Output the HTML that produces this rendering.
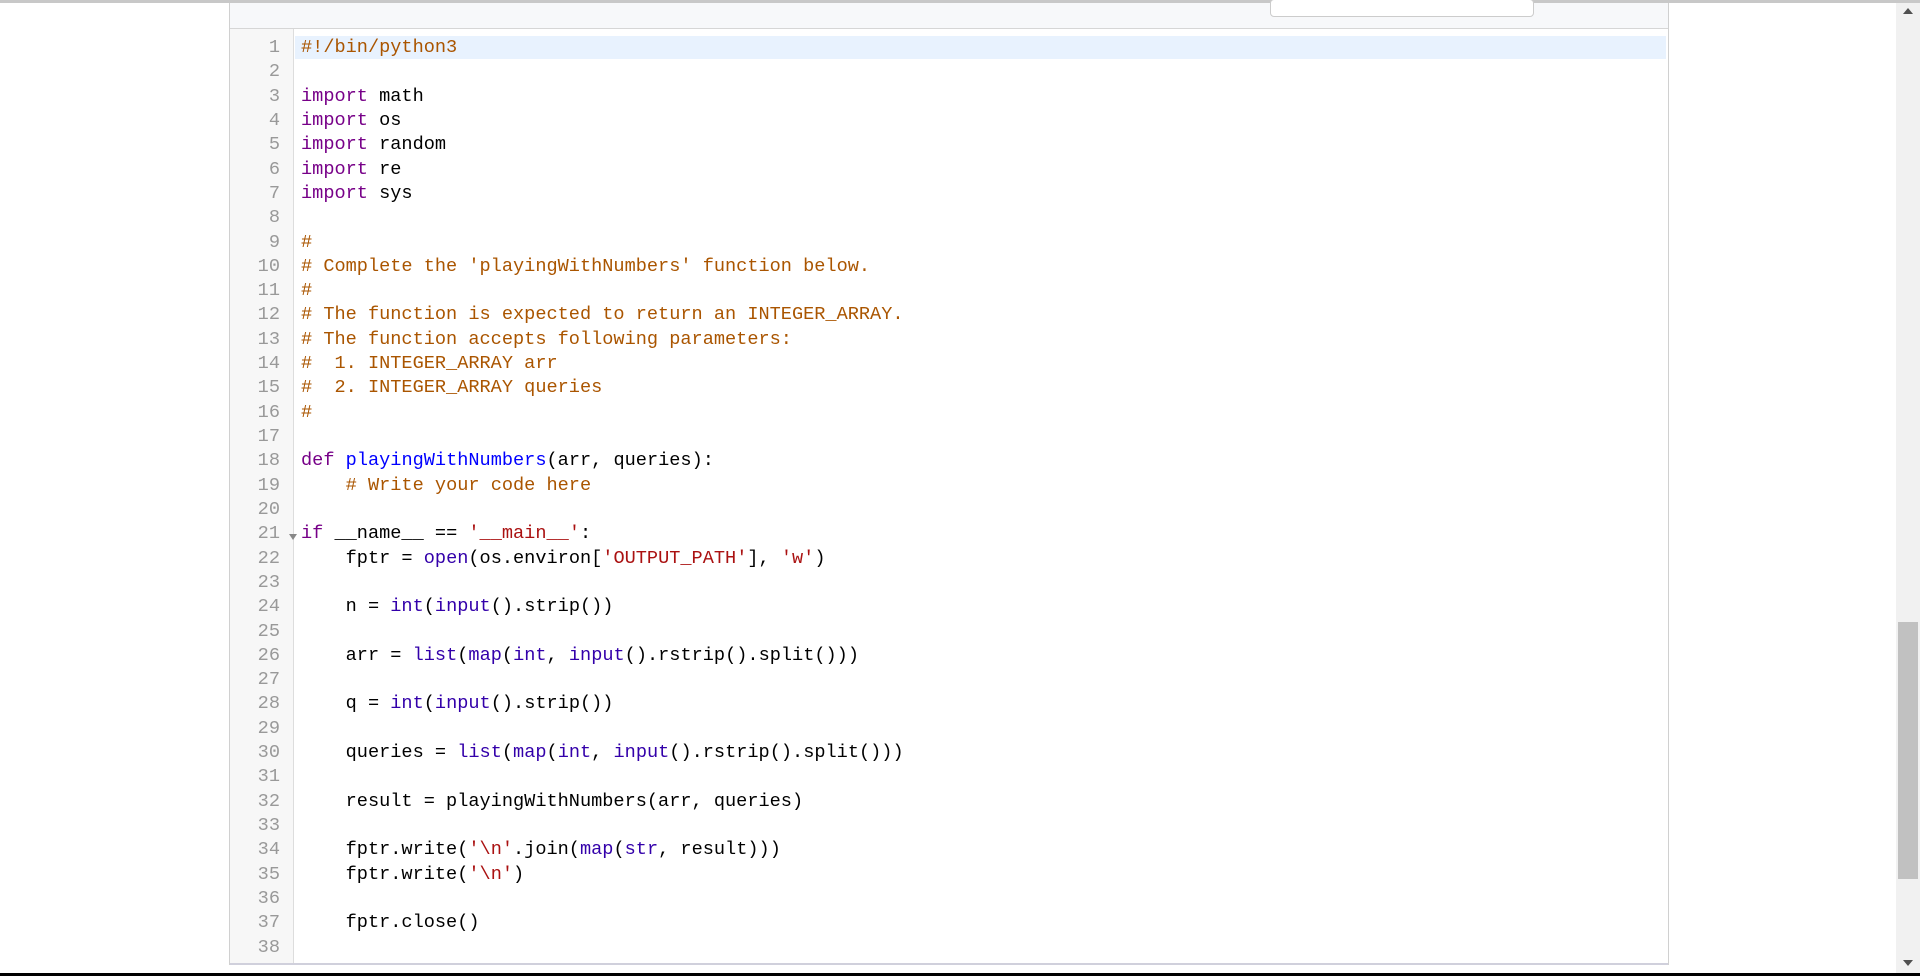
<!DOCTYPE html>
<html><head><meta charset="utf-8"><style>
html,body{margin:0;padding:0;width:1920px;height:976px;overflow:hidden;background:#fff;position:relative;font-family:"Liberation Mono",monospace;}
.topline{position:absolute;left:0;top:0;width:1920px;height:3px;background:#c8c8c8;}
.panel{position:absolute;left:229px;top:3px;width:1438px;height:962px;border-left:1px solid #d0d0d0;border-right:1px solid #d0d0d0;}
.hdr{position:absolute;left:0;top:0;right:0;height:25px;background:#f7f8fa;border-bottom:1px solid #d6d6d6;}
.search{position:absolute;left:1040px;top:-4px;width:262px;height:16px;border:1px solid #ccc;border-radius:4px;background:#fff;}
.gut{position:absolute;left:0;top:26px;width:63px;bottom:0;background:#f7f7f7;border-right:1px solid #ddd;}
.hl{position:absolute;left:65px;top:33px;right:2px;height:23px;background:#e8f2fe;}
.code{position:absolute;left:0;top:33px;right:0;font-size:18.6px;line-height:24.32px;white-space:pre;}
.ln{display:inline-block;width:50px;text-align:right;color:#999;margin-right:21px;}
.bot{position:absolute;left:0;right:0;bottom:0;height:2px;background:#d0d0dc;}
.k{color:#770088}.c{color:#aa5500}.s{color:#aa1111}.b{color:#3300aa}.d{color:#0000ff}
.sb{position:absolute;left:1896px;top:3px;width:24px;height:970px;background:#f1f1f1;}
.th{position:absolute;left:1898px;top:622px;width:20px;height:257px;background:#c1c1c1;}
.black{position:absolute;left:0;top:973px;width:1920px;height:3px;background:#000;}
</style></head><body>
<div class="topline"></div>
<div class="panel">
<div class="hdr"><div class="search"></div></div>
<div class="gut"></div>
<div class="hl"></div>
<div class="bot"></div>
<div style="position:absolute;left:59px;top:531px;width:0;height:0;border-left:4px solid transparent;border-right:4px solid transparent;border-top:6px solid #888"></div>
<div class="code"><span class="ln">1</span><span class="c">#!/bin/python3</span>
<span class="ln">2</span>
<span class="ln">3</span><span class="k">import</span> math
<span class="ln">4</span><span class="k">import</span> os
<span class="ln">5</span><span class="k">import</span> random
<span class="ln">6</span><span class="k">import</span> re
<span class="ln">7</span><span class="k">import</span> sys
<span class="ln">8</span>
<span class="ln">9</span><span class="c">#</span>
<span class="ln">10</span><span class="c"># Complete the 'playingWithNumbers' function below.</span>
<span class="ln">11</span><span class="c">#</span>
<span class="ln">12</span><span class="c"># The function is expected to return an INTEGER_ARRAY.</span>
<span class="ln">13</span><span class="c"># The function accepts following parameters:</span>
<span class="ln">14</span><span class="c">#  1. INTEGER_ARRAY arr</span>
<span class="ln">15</span><span class="c">#  2. INTEGER_ARRAY queries</span>
<span class="ln">16</span><span class="c">#</span>
<span class="ln">17</span>
<span class="ln">18</span><span class="k">def</span> <span class="d">playingWithNumbers</span>(arr, queries):
<span class="ln">19</span>    <span class="c"># Write your code here</span>
<span class="ln">20</span>
<span class="ln">21</span><span class="k">if</span> __name__ == <span class="s">'__main__'</span>:
<span class="ln">22</span>    fptr = <span class="b">open</span>(os.environ[<span class="s">'OUTPUT_PATH'</span>], <span class="s">'w'</span>)
<span class="ln">23</span>
<span class="ln">24</span>    n = <span class="b">int</span>(<span class="b">input</span>().strip())
<span class="ln">25</span>
<span class="ln">26</span>    arr = <span class="b">list</span>(<span class="b">map</span>(<span class="b">int</span>, <span class="b">input</span>().rstrip().split()))
<span class="ln">27</span>
<span class="ln">28</span>    q = <span class="b">int</span>(<span class="b">input</span>().strip())
<span class="ln">29</span>
<span class="ln">30</span>    queries = <span class="b">list</span>(<span class="b">map</span>(<span class="b">int</span>, <span class="b">input</span>().rstrip().split()))
<span class="ln">31</span>
<span class="ln">32</span>    result = playingWithNumbers(arr, queries)
<span class="ln">33</span>
<span class="ln">34</span>    fptr.write(<span class="s">'\n'</span>.join(<span class="b">map</span>(<span class="b">str</span>, result)))
<span class="ln">35</span>    fptr.write(<span class="s">'\n'</span>)
<span class="ln">36</span>
<span class="ln">37</span>    fptr.close()
<span class="ln">38</span>
</div>
</div>
<div class="sb"></div><div class="th"></div>
<div style="position:absolute;left:1903px;top:8px;width:0;height:0;border-left:5px solid transparent;border-right:5px solid transparent;border-bottom:6px solid #505050"></div>
<div style="position:absolute;left:1903px;top:960px;width:0;height:0;border-left:5px solid transparent;border-right:5px solid transparent;border-top:6px solid #505050"></div>
<div class="black"></div>
</body></html>
